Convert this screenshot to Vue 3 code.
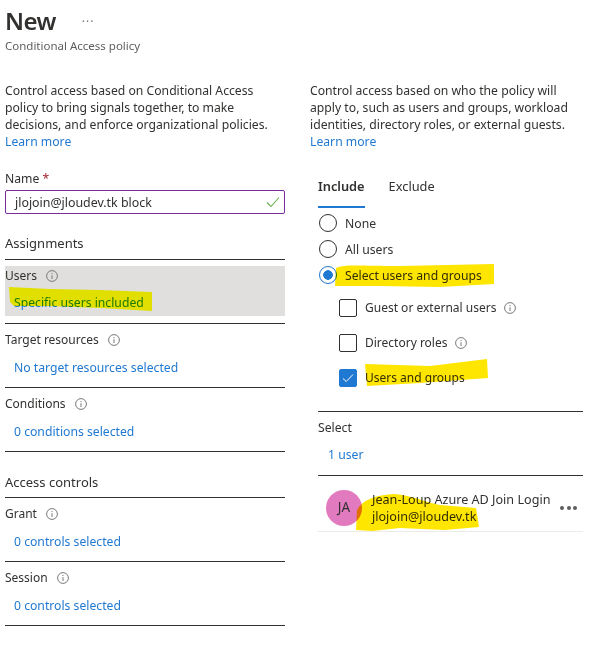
<script setup>
const leftSections = [
  {
    title: "Assignments",
    rows: [
      { label: "Users", value: "Specific users included", active: true },
      { label: "Target resources", value: "No target resources selected" },
      { label: "Conditions", value: "0 conditions selected" },
    ],
  },
  {
    title: "Access controls",
    rows: [
      { label: "Grant", value: "0 controls selected" },
      { label: "Session", value: "0 controls selected" },
    ],
  },
];

const radios = [
  { label: "None" },
  { label: "All users" },
  { label: "Select users and groups", checked: true },
];

const checks = [
  { label: "Guest or external users", info: true },
  { label: "Directory roles", info: true },
  { label: "Users and groups", checked: true },
];
</script>

<template>
  <div class="page">
    <div class="left">
      <div class="title-row">
        <h1>New</h1>
        <span class="more">···</span>
      </div>
      <div class="subtitle">Conditional Access policy</div>

      <p class="desc">
        Control access based on Conditional Access<br />
        policy to bring signals together, to make<br />
        decisions, and enforce organizational policies.<br />
        <a class="link">Learn more</a>
      </p>

      <label class="name-label">Name <span class="req">*</span></label>
      <div class="name-input">
        <span>jlojoin@jloudev.tk block</span>
        <svg width="14" height="12" viewBox="0 0 14 12">
          <path d="M1 6.5 L5 10.5 L13 1.5" fill="none" stroke="#6bb04f" stroke-width="1.1" />
        </svg>
      </div>

      <section v-for="sec in leftSections" :key="sec.title" class="section">
        <div class="section-title">{{ sec.title }}</div>
        <div v-for="row in sec.rows" :key="row.label" class="row">
          <div class="row-inner" :class="{ active: row.active }">
            <div class="row-label">
              {{ row.label }}
              <svg class="info" width="12" height="12" viewBox="0 0 12 12">
                <circle cx="6" cy="6" r="5.4" fill="none" stroke="#7a7a7a" />
                <path d="M6 5.2 V9 M6 3 V4.1" stroke="#7a7a7a" fill="none" />
              </svg>
            </div>
            <a class="link row-value">{{ row.value }}</a>
          </div>
        </div>
      </section>
    </div>

    <div class="right">
      <p class="desc right-desc">
        Control access based on who the policy will<br />
        apply to, such as users and groups, workload<br />
        identities, directory roles, or external guests.<br />
        <a class="link">Learn more</a>
      </p>

      <div class="panel">
        <div class="tabs">
          <span class="tab on">Include</span>
          <span class="tab">Exclude</span>
        </div>

        <div v-for="r in radios" :key="r.label" class="radio-row">
          <span class="radio" :class="{ checked: r.checked }"></span>
          <span>{{ r.label }}</span>
        </div>

        <div class="checks">
          <div v-for="c in checks" :key="c.label" class="check-row">
            <span class="box" :class="{ checked: c.checked }">
              <svg v-if="c.checked" width="12" height="10" viewBox="0 0 12 10">
                <path d="M1 5.5 L4.2 8.5 L11 1.5" fill="none" stroke="#fff" stroke-width="1" />
              </svg>
            </span>
            <span>{{ c.label }}</span>
            <svg v-if="c.info" class="info" width="12" height="12" viewBox="0 0 12 12">
              <circle cx="6" cy="6" r="5.4" fill="none" stroke="#7a7a7a" />
              <path d="M6 5.2 V9 M6 3 V4.1" stroke="#7a7a7a" fill="none" />
            </svg>
          </div>
        </div>

        <div class="select-block">
          <div>Select</div>
          <a class="link select-value">1 user</a>
        </div>

        <div class="user-row">
          <span class="avatar">JA</span>
          <div class="user-text">
            <div>Jean-Loup Azure AD Join Login</div>
            <div>jlojoin@jloudev.tk</div>
          </div>
          <span class="dots"><i></i><i></i><i></i></span>
        </div>
      </div>
    </div>

    <!-- marker strokes drawn over the screenshot -->
    <svg class="marker" width="613" height="650" viewBox="0 0 613 650">
      <path fill="#ffff00" d="M9 287 L50 289 L100 290 L152 292 L152 311 L100 308 L50 306 L14 306 L10 302 Z" />
      <path fill="#ffe600" d="M336 268 C345 264 360 266 400 266 L494 264 L494 284 L440 287 L380 286 L335 286 Z" />
      <path fill="#ffe600" d="M365 364 L430 366 L487 359 L488 378 L420 383 L367 386 Z" />
      <path fill="#ffe600" d="M356 530 L357 510 C362 500 375 495 395 494 C410 495 425 502 440 505 L476 508 L479 527 L445 530 L400 528 L372 531 Z" />
    </svg>
  </div>
</template>

<style>
html, body {
  margin: 0;
  background: #fff;
}
</style>

<style scoped>
.page {
  position: relative;
  width: 613px;
  height: 650px;
  overflow: hidden;
  display: flex;
  background: #fff;
  color: #323130;
  font-family: "Noto Sans", "Open Sans", sans-serif;
  font-size: 12.2px;
  line-height: 17px;
}
.left {
  width: 280px;
  margin-left: 5px;
}
.right {
  width: 273px;
  margin-left: 25px;
}
.title-row {
  display: flex;
  align-items: center;
  height: 36px;
  margin-top: 3px;
}
h1 {
  margin: 0;
  font-size: 24px;
  font-weight: 600;
  line-height: 36px;
  letter-spacing: -0.6px;
}
.more {
  margin-left: 26px;
  font-size: 12px;
  letter-spacing: 1px;
  color: #7a7876;
}
.subtitle {
  margin-top: -2px;
  font-size: 11.5px;
  color: #605e5c;
}
.desc {
  margin: 28px 0 0;
}
.right-desc {
  margin-top: 82px;
}
.link {
  color: #1f78d1;
}
.name-label {
  display: block;
  margin-top: 20px;
}
.req {
  color: #a4262c;
}
.name-input {
  box-sizing: border-box;
  height: 24px;
  margin-top: 3px;
  padding: 0 4px 0 9px;
  display: flex;
  align-items: center;
  justify-content: space-between;
  border: 1px solid #7b2ba0;
  border-radius: 2px;
  font-size: 12.4px;
}
.section {
  margin-top: 20px;
}
.section + .section {
  margin-top: 21px;
}
.section-title {
  height: 25px;
  border-bottom: 1px solid #323130;
  font-size: 13px;
  line-height: 18px;
}
.section + .section .section-title {
  height: 24px;
}
.row {
  height: 64px;
  border-bottom: 1px solid #323130;
  box-sizing: border-box;
  padding-top: 6px;
}
.row-inner {
  height: 50px;
}
.row-inner.active {
  background: #e0dfdd;
}
.row-label {
  display: flex;
  align-items: center;
  gap: 9px;
  height: 19px;
  font-size: 12px;
}
.row-value {
  display: block;
  margin: 10px 0 0 9px;
}
.active .row-value {
  margin-top: 9px;
}
.tabs {
  display: flex;
  gap: 24px;
  margin-top: 26px;
  height: 32px;
}
.tab {
  box-sizing: border-box;
  height: 32px;
  line-height: 20px;
  font-size: 12.8px;
}
.tab.on {
  font-weight: 600;
  border-bottom: 2px solid #1f78d1;
}
.panel {
  margin-left: 8px;
  width: 265px;
}
.radio-row {
  display: flex;
  align-items: center;
  gap: 8px;
  height: 26px;
  padding-left: 1px;
}
.tabs + .radio-row {
  margin-top: 2px;
}
.radio {
  box-sizing: border-box;
  width: 18px;
  height: 18px;
  border: 1px solid #323130;
  border-radius: 50%;
}
.radio.checked {
  border-color: #1f78d1;
  background: radial-gradient(circle, #1f78d1 0 4.5px, transparent 5px);
}
.checks {
  margin-top: 2px;
  padding-left: 21px;
  border-bottom: 1px solid #323130;
  padding-bottom: 16px;
  font-size: 12px;
}
.check-row {
  display: flex;
  align-items: center;
  gap: 8px;
  height: 35px;
}
.box {
  box-sizing: border-box;
  width: 18px;
  height: 18px;
  border: 1px solid #323130;
  border-radius: 2px;
  display: flex;
  align-items: center;
  justify-content: center;
}
.box.checked {
  background: #1f78d1;
  border-color: #1f78d1;
}
.select-block {
  height: 64px;
  box-sizing: border-box;
  padding-top: 7px;
  border-bottom: 1px solid #323130;
}
.select-value {
  display: block;
  margin: 10px 0 0 10px;
}
.user-row {
  display: flex;
  align-items: center;
  height: 56px;
  padding: 8px 0 0 8px;
  border-bottom: 1px solid #edebe9;
  box-sizing: border-box;
  font-size: 12.6px;
}
.avatar {
  width: 36px;
  height: 36px;
  border-radius: 50%;
  background: #e27ac0;
  display: flex;
  align-items: center;
  justify-content: center;
  flex: none;
  font-size: 13.5px;
}
.user-text {
  margin-left: 10px;
  flex: 1;
}
.dots {
  display: flex;
  gap: 2.5px;
  margin-right: 6px;
}
.dots i {
  width: 4px;
  height: 4px;
  border-radius: 50%;
  background: #605e5c;
}
.marker {
  position: absolute;
  left: 0;
  top: 0;
  pointer-events: none;
  mix-blend-mode: multiply;
}
</style>
